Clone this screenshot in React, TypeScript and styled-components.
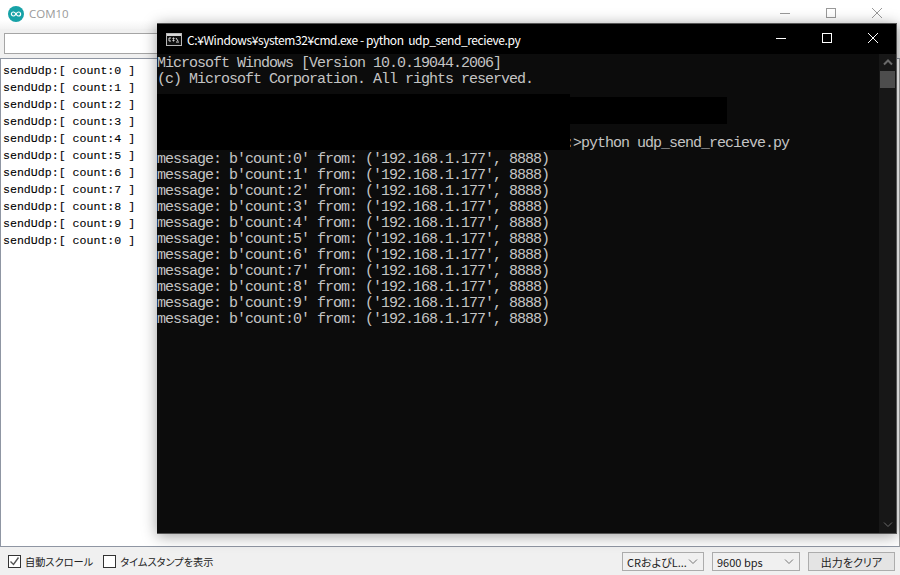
import { createGlobalStyle, styled } from "styled-components";

const serialLines = [0, 1, 2, 3, 4, 5, 6, 7, 8, 9, 0];

const GlobalStyle = createGlobalStyle`
  html, body {
    margin: 0;
    padding: 0;
    background: #f0f0f0;
  }
`;

const Desktop = styled.div`
  position: relative;
  width: 900px;
  height: 575px;
  overflow: hidden;
`;

const SerialWindow = styled.div`
  width: 900px;
  height: 575px;
  display: flex;
  flex-direction: column;
  background: #f0f0f0;
  font-family: "Noto Sans CJK JP", sans-serif;
`;

const SerialTitle = styled.div`
  height: 29px;
  flex: none;
  box-sizing: border-box;
  display: flex;
  align-items: center;
  padding: 0 0 2px 8px;
  gap: 5px;
  background: linear-gradient(#ffffff 70%, #f3f3f3);
  color: #9a9a9a;
  font-family: "Open Sans", sans-serif;
  font-size: 11.5px;
`;

const WindowButtons = styled.div<{ $right: number; $top: number }>`
  position: absolute;
  top: ${(p) => p.$top}px;
  right: ${(p) => p.$right}px;
  display: flex;
  align-items: center;
  gap: 30px;
`;

const InputRow = styled.div`
  height: 29px;
  flex: none;
  padding: 4px 4px 0;
  box-sizing: border-box;
`;

const SendInput = styled.div`
  height: 21px;
  box-sizing: border-box;
  background: #fff;
  border: 1px solid #a5a5a5;
`;

const Output = styled.div`
  height: 489px;
  flex: none;
  box-sizing: border-box;
  background: #fff;
  border: 1px solid #8f96a3;
  border-right-color: #a0a0a0;
  padding: 3px 2px;
  font-family: "Liberation Mono", monospace;
  font-size: 11.6px;
  line-height: 17px;
  color: #000;
  -webkit-text-stroke: 0.1px #000;
`;

const OutputLine = styled.div`
  height: 17px;
  white-space: pre;
`;

const BottomBar = styled.div`
  flex: 1;
  display: flex;
  align-items: center;
  padding: 1px 5px 0 8px;
  font-size: 11px;
  font-feature-settings: "palt";
  color: #222;
`;

const CheckLabel = styled.label<{ $gap: number }>`
  display: flex;
  align-items: center;
  gap: 4px;
  margin-right: ${(p) => p.$gap}px;
  font-size: 10.2px;
`;

const CheckBox = styled.span`
  width: 13px;
  height: 13px;
  box-sizing: border-box;
  background: #fff;
  border: 1px solid #333;
  display: flex;
`;

const Select = styled.div<{ $width: number }>`
  width: ${(p) => p.$width}px;
  height: 19px;
  box-sizing: border-box;
  margin-right: 8px;
  padding: 0 5px 0 4px;
  display: flex;
  align-items: center;
  justify-content: space-between;
  background: #f0f0f0;
  border: 1px solid #acacac;
  white-space: nowrap;
`;

const Spacer = styled.div`
  flex: 1;
`;

const ClearButton = styled.div`
  width: 87px;
  height: 19px;
  box-sizing: border-box;
  display: flex;
  align-items: center;
  justify-content: center;
  background: #e4e4e4;
  border: 1px solid #adadad;
`;

const CmdWindow = styled.div`
  position: absolute;
  left: 157px;
  top: 23px;
  width: 740px;
  height: 511px;
  box-sizing: border-box;
  display: flex;
  flex-direction: column;
  background: #0c0c0c;
  border-top: 1px solid #555;
  border-right: 1px solid #555;
  border-bottom: 1px solid #555;
  box-shadow: 0 2px 14px rgba(0, 0, 0, 0.38);
`;

const CmdTitle = styled.div`
  height: 30px;
  flex: none;
  display: flex;
  align-items: center;
  gap: 5px;
  padding-left: 9px;
  background: #000;
  color: #fff;
  font-family: "Noto Sans CJK JP", sans-serif;
  font-size: 12px;
  letter-spacing: -0.4px;
  white-space: pre;
`;

const CmdBody = styled.div`
  position: relative;
  flex: 1;
  display: flex;
  min-height: 0;
`;

const Console = styled.pre`
  flex: 1;
  margin: 0;
  padding-top: 2px;
  font-family: "Liberation Mono", monospace;
  font-size: 15px;
  letter-spacing: -1px;
  line-height: 16px;
  color: #c4c4c4;
`;

const Redaction = styled.div<{ $left: number; $top: number; $w: number; $h: number }>`
  position: absolute;
  left: ${(p) => p.$left}px;
  top: ${(p) => p.$top}px;
  width: ${(p) => p.$w}px;
  height: ${(p) => p.$h}px;
  background: #000;
`;

const ScrollBar = styled.div`
  width: 17px;
  flex: none;
  display: flex;
  flex-direction: column;
  align-items: center;
  background: #171717;
`;

const ScrollArrow = styled.div`
  height: 17px;
  flex: none;
  display: flex;
  align-items: center;
  justify-content: center;
`;

const ScrollThumb = styled.div`
  width: 15px;
  height: 17px;
  flex: none;
  background: #4d4d4d;
`;

const ScrollTrack = styled.div`
  flex: 1;
`;

const ArduinoLogo = () => (
  <svg width="16" height="16" viewBox="0 0 16 16">
    <circle cx="8" cy="8" r="8" fill="#17a2a7" />
    <path
      d="M5.4 6c1.4 0 1.9 1.2 2.6 2 .7.8 1.2 2 2.6 2 1.1 0 2-.9 2-2s-.9-2-2-2c-1.4 0-1.9 1.2-2.6 2-.7.8-1.2 2-2.6 2-1.1 0-2-.9-2-2s.9-2 2-2z"
      fill="none"
      stroke="#fff"
      strokeWidth="1.2"
    />
  </svg>
);

const CmdIcon = () => (
  <svg width="16" height="13" viewBox="0 0 16 13" style={{ flex: "none" }}>
    <rect x="0.5" y="0.5" width="15" height="12" fill="#111" stroke="#b8b8b8" />
    <rect x="1" y="1" width="14" height="2" fill="#d8d8d8" />
    <path d="M3 5h2M3 5v3h2M7 5h1v1H7zM7 7h1v1H7zM10 5l2 3M10 9h3" stroke="#ddd" strokeWidth="1" fill="none" />
  </svg>
);

const Buttons = ({ color }: { color: string }) => (
  <>
    <svg width="16" height="16" viewBox="0 0 16 16">
      <path d="M3 8.5h10" stroke={color} fill="none" />
    </svg>
    <svg width="16" height="16" viewBox="0 0 16 16">
      <rect x="3.5" y="3.5" width="9" height="9" stroke={color} fill="none" />
    </svg>
    <svg width="16" height="16" viewBox="0 0 16 16">
      <path d="M3 3l10 10M13 3L3 13" stroke={color} fill="none" />
    </svg>
  </>
);

const Chevron = ({ color, up }: { color: string; up?: boolean }) => (
  <svg width="10" height="7" viewBox="0 0 10 7">
    <path d={up ? "M1 5.5L5 1.5l4 4" : "M1 1.5l4 4 4-4"} stroke={color} strokeWidth={up ? 2 : 1} fill="none" />
  </svg>
);

const consoleText = [
  "Microsoft Windows [Version 10.0.19044.2006]",
  "(c) Microsoft Corporation. All rights reserved.",
  "",
  "",
  "",
  " ".repeat(51) + ":>python udp_send_recieve.py",
  ...serialLines.map((n) => `message: b'count:${n}' from: ('192.168.1.177', 8888)`),
].join("\n");

export default function App() {
  return (
    <Desktop>
      <GlobalStyle />
      <SerialWindow>
        <SerialTitle>
          <ArduinoLogo />
          COM10
        </SerialTitle>
        <WindowButtons $right={15} $top={5}>
          <Buttons color="#9a9a9a" />
        </WindowButtons>
        <InputRow>
          <SendInput />
        </InputRow>
        <Output>
          {serialLines.map((n, i) => (
            <OutputLine key={i}>{`sendUdp:[ count:${n} ]`}</OutputLine>
          ))}
        </Output>
        <BottomBar>
          <CheckLabel $gap={10}>
            <CheckBox>
              <svg width="11" height="11" viewBox="0 0 11 11">
                <path d="M1.5 5.5l3 3 5-7" stroke="#555" strokeWidth="1.4" fill="none" />
              </svg>
            </CheckBox>
            自動スクロール
          </CheckLabel>
          <CheckLabel $gap={0}>
            <CheckBox />
            タイムスタンプを表示
          </CheckLabel>
          <Spacer />
          <Select $width={82}>
            CRおよびL...
            <Chevron color="#777" />
          </Select>
          <Select $width={88}>
            9600 bps
            <Chevron color="#777" />
          </Select>
          <ClearButton>出力をクリア</ClearButton>
        </BottomBar>
      </SerialWindow>

      <CmdWindow>
        <CmdTitle>
          <CmdIcon />
          {"C:¥Windows¥system32¥cmd.exe - python  udp_send_recieve.py"}
        </CmdTitle>
        <WindowButtons $right={15} $top={6}>
          <Buttons color="#ffffff" />
        </WindowButtons>
        <CmdBody>
          <Console>{consoleText}</Console>
          <Redaction $left={0} $top={40} $w={413} $h={56} />
          <Redaction $left={413} $top={43} $w={157} $h={27} />
          <ScrollBar>
            <ScrollArrow>
              <Chevron color="#6a6a6a" up />
            </ScrollArrow>
            <ScrollThumb />
            <ScrollTrack />
            <ScrollArrow>
              <Chevron color="#6a6a6a" />
            </ScrollArrow>
          </ScrollBar>
        </CmdBody>
      </CmdWindow>
    </Desktop>
  );
}
